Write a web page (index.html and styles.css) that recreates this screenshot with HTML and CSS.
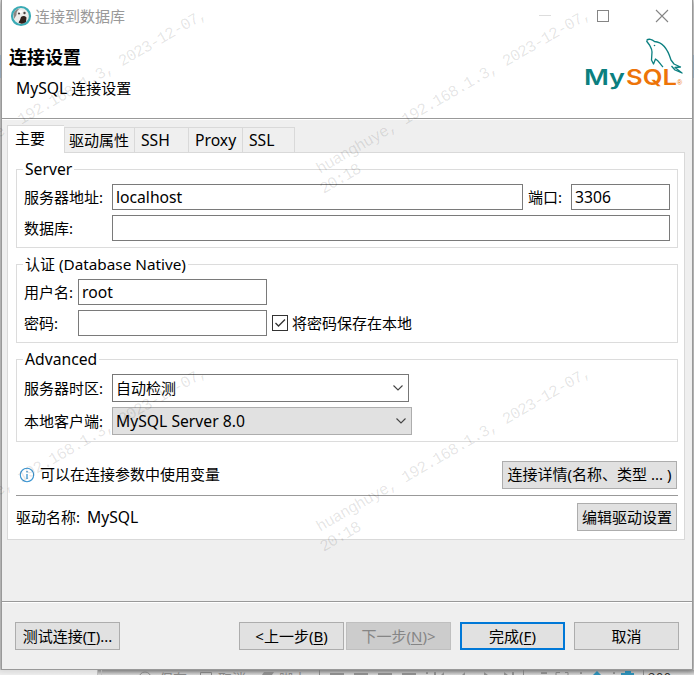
FILE: index.html
```html
<!DOCTYPE html>
<html lang="zh-CN">
<head>
<meta charset="utf-8">
<title>连接到数据库</title>
<link rel="stylesheet" href="styles.css">
</head>
<body>
<div class="workbench">
  <div class="dialog">
    <header class="banner">
      <div class="titlebar">
        <svg class="app-icon" width="22" height="22" viewBox="0 0 22 22">
          <circle cx="11" cy="11" r="9" fill="#ededeb" stroke="#3aabb5" stroke-width="2.2"/>
          <path d="M3.5 9Q5 4 10 3.5Q6 6 6.5 10L4 14Z" fill="#8b8582"/>
          <path d="M11 12Q14 10 16.5 12.5L16 17Q12 20 8.5 17.5L10 15Z" fill="#30211c"/>
          <path d="M9 6Q11 4.5 13 6L11.5 8H9Z" fill="#fff"/>
          <circle cx="9" cy="8.5" r="1.1" fill="#4c4442"/><circle cx="14.5" cy="8" r="1.2" fill="#4c4442"/>
        </svg>
        <span class="window-title">连接到数据库</span>
        <svg class="controls" width="130" height="14" viewBox="0 0 130 14" fill="none">
          <path d="M0 6.5H12" stroke="#ddd"/>
          <rect x="58.5" y="1.5" width="11" height="11" stroke="#858585"/>
          <path d="M117 1L129 13M129 1L117 13" stroke="#858585" stroke-width="1.1"/>
        </svg>
      </div>
      <h1>连接设置</h1>
      <p><span class="latin">MySQL</span> 连接设置</p>
      <svg class="logo" width="104" height="58" viewBox="0 0 104 58">
        <g fill="none" stroke="#0b7f80" stroke-width="1.3" stroke-linejoin="round">
          <path d="M65.500 4.500C67.500 2.500 71 3 73.500 5.500C82 6 87 14 90 24L93 28L99.500 31L94 31.500L101 37L94 34L90.500 30"/>
          <path d="M65.500 5L68.500 9C69.500 11 71 13 71 16L70.500 24L72.500 28L74.500 23C78 25 79 28 82 31"/>
        </g>
        <circle cx="73.500" cy="9.500" r=".8" fill="#0b7f80"/>
        <text class="brand my" x="3" y="48.500" textLength="41" lengthAdjust="spacingAndGlyphs">My</text>
        <text class="brand sql" x="45" y="48.500" textLength="51" lengthAdjust="spacingAndGlyphs">SQL</text>
        <text class="reg" x="96" y="49">®</text>
      </svg>
    </header>
    <main>
      <nav class="tabs">
        <span class="tab active">主要</span><span class="tab props">驱动属性</span><span class="tab latin">SSH</span><span class="tab latin">Proxy</span><span class="tab ssl latin">SSL</span>
      </nav>
      <section class="panel">
        <fieldset>
          <legend class="latin">Server</legend>
          <div class="row"><label>服务器地址:</label><div class="input grow latin">localhost</div><label class="port">端口:</label><div class="input port-value latin">3306</div></div>
          <div class="row"><label>数据库:</label><div class="input grow"></div></div>
        </fieldset>
        <fieldset class="auth">
          <legend>认证 <span class="latin native">(Database Native)</span></legend>
          <div class="row"><label>用户名:</label><div class="input user latin">root</div></div>
          <div class="row"><label>密码:</label><div class="input user"></div>
            <svg class="check" width="16" height="16" viewBox="0 0 16 16" fill="none" stroke="#333"><rect x=".5" y=".5" width="15" height="15"/><path d="M3.500 8L6.500 11L13 4.500" stroke-width="1.3"/></svg>
            <span>将密码保存在本地</span></div>
        </fieldset>
        <fieldset>
          <legend class="latin">Advanced</legend>
          <div class="row"><label>服务器时区:</label><div class="select zone"><span>自动检测</span><svg width="10" height="6" viewBox="0 0 10 6"><path d="M.5.5L5 5L9.500.5"/></svg></div></div>
          <div class="row"><label>本地客户端:</label><div class="select client"><span class="latin">MySQL Server 8.0</span><svg width="10" height="6" viewBox="0 0 10 6"><path d="M.5.5L5 5L9.500.5"/></svg></div></div>
        </fieldset>
        <div class="hint">
          <svg width="16" height="16" viewBox="0 0 16 16" fill="none" stroke="#3c96d2"><circle cx="8" cy="8" r="6.700" stroke-width="1.1"/><path d="M8 7V12M8 4V5.500" stroke-width="1.3"/></svg>
          <span>可以在连接参数中使用变量</span>
          <button class="details">连接详情(名称、类型 ... )</button>
        </div>
        <div class="driver"><span>驱动名称:</span><span class="driver-name latin">MySQL</span><button class="edit">编辑驱动设置</button></div>
      </section>
    </main>
    <footer>
      <button>测试连接(<u>T</u>)...</button>
      <button class="back">&lt;上一步(<u>B</u>)</button>
      <button class="next" disabled>下一步(<u>N</u>)&gt;</button>
      <button class="finish">完成(<u>F</u>)</button>
      <button class="cancel">取消</button>
    </footer>
  </div>
  <div class="toolbar">
    <svg width="694" height="5" viewBox="0 0 694 5">
      <path d="M0 0H97V5H0Z" fill="#f2f2f2"/><path d="M97.500 0V5M101.500 0V5" stroke="#bbb"/>
      <g fill="none" stroke="#777"><circle cx="145" cy="8" r="6"/><path d="M200.500 5V2.500H211.500V5M319.500 0V5M523.500 0V5M643.500 0V5M556 5V2.500H560M568 5V2.500H565"/></g>
      <g fill="#808080"><path d="M262 5l2-3h10l-2 3zM330 3h14v2h-14zM354 3h14v2h-14zM378 3h14v2h-14zM402 3h14v2h-14zM426 2h2v2h-2zM434 2h2v3h-2zM441 5l3-3v3zM462 5l3-3v3zM484 2l4 3h-4zM504 2l4 3h-4zM512 2h2v3h-2zM541 2h6v2h-6zM580 2h2v2h-2zM613 2h2v2h-2z"/></g>
      <path d="M593 5L597 1L601 5ZM621 5V3H625V1H631V3H634V5Z" fill="#087fae"/>
      <g class="tool-label"><text x="159" y="14">保存</text><text x="218" y="14">取消</text><text x="279" y="14">脚本</text><text x="648" y="14" fill="#111">200</text></g>
    </svg>
  </div>
  <svg class="watermark" width="694" height="675" viewBox="0 0 694 675">
    <defs><g id="mark"><text x="0" y="0" textLength="314">huanghuye, 192.168.1.3, 2023-12-07,</text><text x="-7" y="19" textLength="45">20:18</text></g></defs>
    <use href="#mark" transform="translate(320 174) rotate(-30)"/>
    <use href="#mark" transform="translate(-64 174) rotate(-30)"/>
    <use href="#mark" transform="translate(320 532) rotate(-30)"/>
    <use href="#mark" transform="translate(-64 532) rotate(-30)"/>
  </svg>
</div>
</body>
</html>
```
FILE: styles.css
```css
* { box-sizing: border-box; }
body { margin: 0; font: 15px/21px "Noto Sans", "Noto Sans CJK SC", sans-serif; color: #000; overflow: hidden; }
h1, p { margin: 0; }
.workbench { position: relative; width: 694px; height: 675px; padding-left: 1px; overflow: hidden; background: linear-gradient(#e6e6e6 0 55px, #a9c8e4 55px 78px, #ddd 78px); }
.dialog { width: 692px; height: 670px; border: 1px solid #999; border-top: 0; background: #efefef; box-shadow: 0 1px 5px #777; position: relative; }
.banner { position: relative; height: 119px; background: #fff; border-bottom: 1px solid #999; }
.titlebar { display: flex; align-items: center; height: 32px; padding: 0 23px 0 8px; }
.window-title { margin-left: 3px; color: #999; }
.controls { margin-left: auto; }
h1 { margin: 14px 0 0 7px; font-size: 18px; line-height: 22px; font-weight: 700; }
p { margin: 10px 0 0 14px; }
.latin { font-size: 15.7px; }
.native { font-size: 15.3px; }
.logo { position: absolute; left: 579px; top: 36px; }
.brand { font: 600 21px Inter, sans-serif; }
.my { fill: #0b7f80; }
.sql { fill: #ed7408; }
.reg { font: 7px "Liberation Sans", sans-serif; fill: #ed7408; }
main { height: 482px; padding: 5px 0 0 5px; border-top: 1px solid #fff; }
.tabs { display: flex; align-items: flex-end; height: 28px; position: relative; z-index: 1; }
.tab { height: 26px; width: 54px; padding: 2px 0 0 6px; border: 1px solid #d9d9d9; border-left: 0; }
.tab.active { width: 57px; height: 28px; padding: 2px 0 0 7px; border-left: 1px solid #d9d9d9; border-bottom: 0; border-right: 0; background: #fff; }
.tab.props { width: 71px; padding-left: 4px; border-left: 1px solid #d9d9d9; }
.tab.ssl { width: 52px; }
.panel { width: 678px; height: 388px; margin-top: -1px; padding: 6px 6px 0 8px; border: 1px solid #d9d9d9; background: #fff; }
fieldset { margin: 0 0 6px; padding: 4px 7px 6px; border: 1px solid #dcdcdc; min-width: 0; }
legend { height: 21px; padding: 0 2px; margin-left: -1px; }
.row { display: flex; align-items: center; }
.row + .row { margin-top: 5px; }
label { width: 88px; white-space: nowrap; }
.auth label { width: 54px; }
.input { height: 26px; padding: 2px 3px; border: 1px solid #7a7a7a; background: #fff; }
.grow { flex: 1; }
label.port { width: 43px; margin-left: 5px; }
.port-value { width: 99px; }
.user { width: 189px; }
.check { margin: 0 4px 0 5px; }
.select { display: flex; align-items: center; justify-content: space-between; height: 28px; padding: 0 5px 0 3px; border: 1px solid #777; }
.select path { fill: none; stroke: #444; stroke-width: 1.1; }
.zone { width: 297px; }
.client { width: 300px; background: #e1e1e1; border-color: #adadad; }
.hint { display: flex; align-items: center; height: 48px; margin-top: 6px; padding: 6px 0 0 3px; border-bottom: 1px solid #999; }
.hint span { margin-left: 5px; }
button { height: 28px; width: 105px; padding: 0; border: 1px solid #adadad; border-radius: 0; background: #e1e1e1; color: #000; font: inherit; white-space: nowrap; }
button u { text-underline-offset: 2px; }
.details { width: 175px; margin-left: auto; margin-right: 1px; }
.driver { display: flex; align-items: center; height: 42px; padding-right: 1px; }
.driver-name { margin-left: 7px; }
.edit { width: 100px; margin-left: auto; }
footer { display: flex; height: 68px; padding: 20px 0 0 13px; border-top: 1px solid #999; box-shadow: inset 0 1px #fff; }
.back { margin-left: 119px; }
.next { margin-left: 2px; background: #ccc; border-color: #bfbfbf; color: #858585; }
.finish { margin-left: 9px; border: 2px solid #0078d7; }
.cancel { margin-left: 9px; }
.toolbar { height: 5px; margin-left: -1px; background: linear-gradient(#aaa, #dedede); }
.toolbar svg { display: block; opacity: .8; }
.tool-label { font: 14px "Noto Sans CJK SC", sans-serif; fill: #777; }
.watermark { position: absolute; inset: 0; pointer-events: none; }
.watermark text { font: 16px "Liberation Mono", monospace; fill: #000; fill-opacity: .11; white-space: pre; }
```
